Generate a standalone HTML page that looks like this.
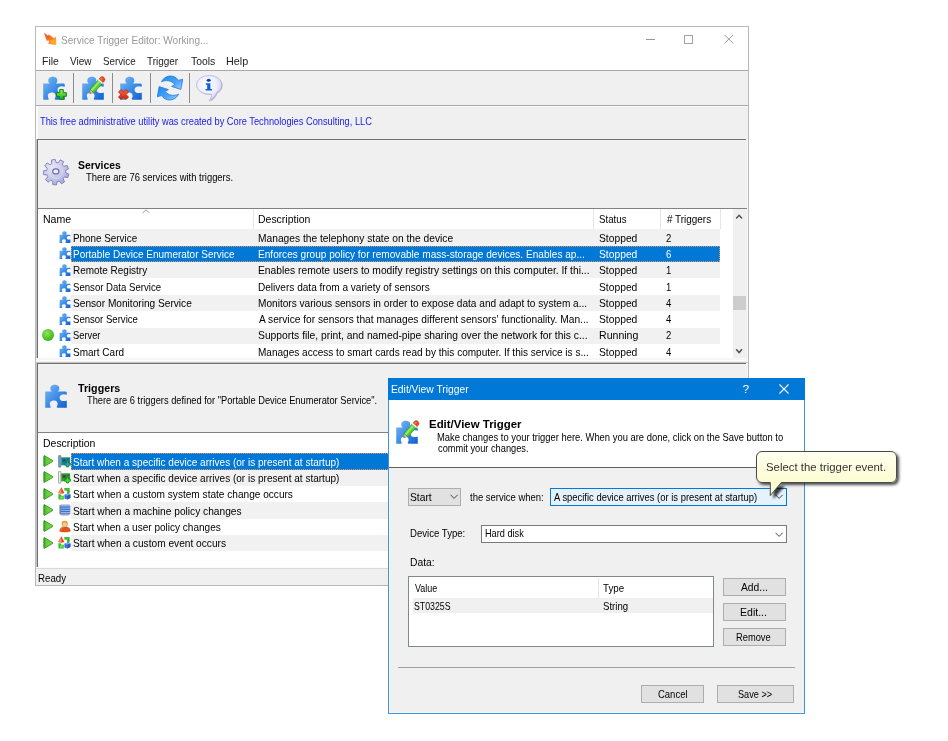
<!DOCTYPE html>
<html>
<head>
<meta charset="utf-8">
<title>Service Trigger Editor</title>
<style>
html,body{margin:0;padding:0;background:#fff;}
body{width:948px;height:741px;position:relative;overflow:hidden;font-family:"Liberation Sans",sans-serif;font-size:12px;color:#000;}
.a{position:absolute;}
.t{position:absolute;white-space:pre;line-height:14px;transform-origin:0 0;}
.btn{position:absolute;background:#e1e1e1;border:1px solid #adadad;box-sizing:border-box;}
</style>
</head>
<body>
<svg width="0" height="0" style="position:absolute">
<defs>
<linearGradient id="pg" x1="0" y1="0" x2="1" y2="1"><stop offset="0" stop-color="#7fbaf5"/><stop offset="0.5" stop-color="#3f8ee6"/><stop offset="1" stop-color="#0f5fcf"/></linearGradient>
<linearGradient id="gg" x1="0" y1="0" x2="1" y2="0"><stop offset="0" stop-color="#2f9a1e"/><stop offset="0.25" stop-color="#63c83c"/><stop offset="1" stop-color="#7ed650"/></linearGradient>
<linearGradient id="plusg" x1="0" y1="0" x2="0" y2="1"><stop offset="0" stop-color="#9af06a"/><stop offset="1" stop-color="#1fae12"/></linearGradient>
<linearGradient id="xg" x1="0" y1="0" x2="0" y2="1"><stop offset="0" stop-color="#ff6a3c"/><stop offset="1" stop-color="#d81e08"/></linearGradient>
<linearGradient id="rfg" x1="0" y1="0" x2="1" y2="1"><stop offset="0" stop-color="#1f86ee"/><stop offset="0.6" stop-color="#4ea4f8"/><stop offset="1" stop-color="#a6d2ff"/></linearGradient>
<linearGradient id="rfg2" x1="1" y1="1" x2="0" y2="0"><stop offset="0" stop-color="#1f86ee"/><stop offset="0.6" stop-color="#4ea4f8"/><stop offset="1" stop-color="#a6d2ff"/></linearGradient>
<radialGradient id="bubg" cx="0.4" cy="0.35" r="0.7"><stop offset="0" stop-color="#ffffff"/><stop offset="0.6" stop-color="#ececfd"/><stop offset="1" stop-color="#c4c4f2"/></radialGradient>
<linearGradient id="peng" x1="0" y1="0" x2="1" y2="1"><stop offset="0" stop-color="#b6f08a"/><stop offset="1" stop-color="#3fb81e"/></linearGradient>
<radialGradient id="gearg" cx="0.35" cy="0.3" r="0.8"><stop offset="0" stop-color="#e6e7f6"/><stop offset="0.6" stop-color="#c3c5e6"/><stop offset="1" stop-color="#9fa1d4"/></radialGradient>
</defs>
</svg>
<div class="a" style="left:35px;top:26px;width:714px;height:560px;background:#f0f0f0;box-sizing:border-box;border:1px solid #b9b9b9;"></div>
<div class="a" style="left:36px;top:27px;width:712px;height:43px;background:#fff;"></div>
<svg class="a" style="left:43px;top:32px" width="14" height="14" viewBox="0 0 14 14"><defs><linearGradient id="flg" x1="0" y1="0" x2="1" y2="1"><stop offset="0" stop-color="#cc4a50"/><stop offset="0.35" stop-color="#f8601e"/><stop offset="0.7" stop-color="#ff8a1c"/><stop offset="1" stop-color="#ffc61a"/></linearGradient></defs><path d="M1.2,0.9 L4.8,3.7 L5.9,2.8 L11,6.4 L12.7,5 L12.9,12.8 L5.4,11.6 L6.4,9.7 L5.1,7.8 L4,8.9 Z" fill="url(#flg)" stroke="#ff7a2a" stroke-width="0.4" stroke-linejoin="round"/><path d="M7,8 L11.6,7.4 L11.8,11.6 L7.4,10.8 Z" fill="#ffb01a" opacity="0.8"/></svg>
<div class="t" style="left:61.04px;top:33px;font-size:11.5px;transform:scaleX(0.8747);color:#999;">Service Trigger Editor: Working...</div>
<div class="a" style="left:646px;top:39px;width:9px;height:1px;background:#999;"></div>
<div class="a" style="left:684px;top:35px;width:7px;height:7px;background:transparent;border:1px solid #a2a2a2;"></div>
<svg class="a" style="left:724px;top:34px" width="10" height="10" viewBox="0 0 10 10"><path d="M0.5 0.8 L9.1 9.4 M9.1 0.8 L0.5 9.4" stroke="#999" stroke-width="1" fill="none"/></svg>
<div class="t" style="left:41.64px;top:54px;font-size:11.5px;transform:scaleX(0.9077);color:#222;">File</div>
<div class="t" style="left:69.56px;top:54px;font-size:11.5px;transform:scaleX(0.8746);color:#222;">View</div>
<div class="t" style="left:102.86px;top:54px;font-size:11.5px;transform:scaleX(0.8496);color:#222;">Service</div>
<div class="t" style="left:147.18px;top:54px;font-size:11.5px;transform:scaleX(0.8664);color:#222;">Trigger</div>
<div class="t" style="left:190.77px;top:54px;font-size:11.5px;transform:scaleX(0.9055);color:#222;">Tools</div>
<div class="t" style="left:225.81px;top:54px;font-size:11.5px;transform:scaleX(0.9404);color:#222;">Help</div>
<div class="a" style="left:36px;top:70px;width:712px;height:1px;background:#a9a9a9;"></div>
<div class="a" style="left:36px;top:105px;width:712px;height:1px;background:#a9a9a9;"></div>
<div class="a" style="left:36px;top:106px;width:712px;height:1px;background:#fbfbfb;"></div>
<div class="a" style="left:73px;top:73px;width:1px;height:30px;background:#8c8c8c;"></div>
<div class="a" style="left:112px;top:73px;width:1px;height:30px;background:#8c8c8c;"></div>
<div class="a" style="left:150px;top:73px;width:1px;height:30px;background:#8c8c8c;"></div>
<div class="a" style="left:189px;top:73px;width:1px;height:30px;background:#8c8c8c;"></div>
<svg class="a" style="left:42px;top:76px" width="24" height="24" viewBox="0 0 24 24"><path d="M1.2,7.6 L7.8,7.6 C6,6.5 5.8,3.8 7,2.2 C8.5,0.2 13,0.2 14.6,2.2 C15.8,3.8 15.6,6.5 13.8,7.6 L22,7.6 C23,8.5 23.2,10 22.5,10.8 C21,10 18.5,10 17,11 C15,12.5 15,15 17,16.5 C18.5,17.3 21,17.3 22.8,16.5 L22.8,23.8 L13.5,23.8 C12.5,23 12.5,22.5 13.3,21.5 C14.3,19.5 13.3,17 11,16.5 C8,16 5.5,17.5 5.8,20 C6,21.5 7,22.5 6.5,23.8 L1.2,23.8 Z" fill="url(#pg)"/></svg>
<svg class="a" style="left:56px;top:89px" width="11" height="11" viewBox="0 0 11 11"><path d="M3.7,0.6 H7.3 V3.7 H10.4 V7.3 H7.3 V10.4 H3.7 V7.3 H0.6 V3.7 H3.7 Z" fill="url(#plusg)" stroke="#0f8a0a" stroke-width="1" stroke-linejoin="round"/></svg>
<svg class="a" style="left:80.7px;top:76px" width="24" height="24" viewBox="0 0 24 24"><path d="M1.2,7.6 L7.8,7.6 C6,6.5 5.8,3.8 7,2.2 C8.5,0.2 13,0.2 14.6,2.2 C15.8,3.8 15.6,6.5 13.8,7.6 L22,7.6 C23,8.5 23.2,10 22.5,10.8 C21,10 18.5,10 17,11 C15,12.5 15,15 17,16.5 C18.5,17.3 21,17.3 22.8,16.5 L22.8,23.8 L13.5,23.8 C12.5,23 12.5,22.5 13.3,21.5 C14.3,19.5 13.3,17 11,16.5 C8,16 5.5,17.5 5.8,20 C6,21.5 7,22.5 6.5,23.8 L1.2,23.8 Z" fill="url(#pg)"/></svg>
<svg class="a" style="left:80.7px;top:76px;overflow:visible" width="26" height="24" viewBox="0 0 26 24"><g transform="translate(8.7,17.6) rotate(-48.5)"><path d="M0,0 L3.4,-2.5 L3.4,2.5 Z" fill="#dcc8a0" stroke="#8a7a5a" stroke-width="0.5"/><path d="M0,0 L1.4,-1 L1.4,1 Z" fill="#666"/><rect x="3.4" y="-2.7" width="12" height="5.4" fill="#58c832" stroke="#2f9a1a" stroke-width="0.7"/><rect x="3.6" y="-1.8" width="11.6" height="2.2" fill="#98f070" opacity="0.85"/><rect x="15.4" y="-2.7" width="1.9" height="5.4" fill="#f8f8f8" stroke="#b8b8b8" stroke-width="0.4"/><path d="M17.3,-2.7 H19.2 A2.4,2.7 0 0 1 19.2,2.7 H17.3 Z" fill="#e84a22" stroke="#c0381a" stroke-width="0.5"/><path d="M17.6,-1.8 H19.4 A1.2,1 0 0 1 19.4,0 H17.6 Z" fill="#f48a60" opacity="0.7"/></g></svg>
<svg class="a" style="left:119px;top:76px" width="24" height="24" viewBox="0 0 24 24"><path d="M1.2,7.6 L7.8,7.6 C6,6.5 5.8,3.8 7,2.2 C8.5,0.2 13,0.2 14.6,2.2 C15.8,3.8 15.6,6.5 13.8,7.6 L22,7.6 C23,8.5 23.2,10 22.5,10.8 C21,10 18.5,10 17,11 C15,12.5 15,15 17,16.5 C18.5,17.3 21,17.3 22.8,16.5 L22.8,23.8 L13.5,23.8 C12.5,23 12.5,22.5 13.3,21.5 C14.3,19.5 13.3,17 11,16.5 C8,16 5.5,17.5 5.8,20 C6,21.5 7,22.5 6.5,23.8 L1.2,23.8 Z" fill="url(#pg)"/></svg>
<svg class="a" style="left:118px;top:89px" width="11" height="11" viewBox="0 0 11 11"><path d="M2.9,0.6 L5.5,3 L8.1,0.6 L10.5,3 L8,5.5 L10.5,8.1 L8.1,10.5 L5.5,8 L2.9,10.5 L0.5,8.1 L3,5.5 L0.5,3 Z" fill="url(#xg)" stroke="#b81806" stroke-width="0.8" stroke-linejoin="round"/></svg>
<svg class="a" style="left:157px;top:75px" width="26" height="26" viewBox="0 0 26 26"><path d="M4.5,6.8 C7,1.2 14.5,-1.2 19.8,3.4 L21.6,5.4 L25.8,4.2 L23.8,14.4 L14.6,11.4 L17.8,9.6 C14.5,5.4 9,4.6 4.5,6.8 Z" fill="url(#rfg)" stroke="#1a7ae0" stroke-width="0.8" stroke-linejoin="round"/><path d="M4.5,6.8 C7,1.2 14.5,-1.2 19.8,3.4 L21.6,5.4 L25.8,4.2 L23.8,14.4 L14.6,11.4 L17.8,9.6 C14.5,5.4 9,4.6 4.5,6.8 Z" transform="rotate(180 13 13)" fill="url(#rfg2)" stroke="#1a7ae0" stroke-width="0.8" stroke-linejoin="round"/></svg>
<svg class="a" style="left:196px;top:75px" width="27" height="27" viewBox="0 0 27 27"><path d="M13.3,0.6 C20.5,0.6 25.8,4.6 25.8,9.8 C25.8,13.6 23.4,16.2 20.6,17.6 C19.6,21 16.8,24.4 13.2,25.8 C15.2,23.4 15.8,21 15.4,19.2 C7,19.8 0.6,15.4 0.6,9.8 C0.6,4.6 6,0.6 13.3,0.6 Z" fill="#8c8ca8" opacity="0.55" transform="translate(0.8,0.8)"/><path d="M13.3,0.6 C20.5,0.6 25.8,4.6 25.8,9.8 C25.8,13.6 23.4,16.2 20.6,17.6 C19.6,21 16.8,24.4 13.2,25.8 C15.2,23.4 15.8,21 15.4,19.2 C7,19.8 0.6,15.4 0.6,9.8 C0.6,4.6 6,0.6 13.3,0.6 Z" fill="url(#bubg)" stroke="#aeaee0" stroke-width="0.8"/><ellipse cx="12.7" cy="5.2" rx="2" ry="1.5" fill="#0b3fb0"/><path d="M9.8,8.2 H14.4 V14 H15.9 V15.6 H9.6 V14 H11.2 V9.8 H9.8 Z" fill="#0e62d8"/></svg>
<svg class="a" style="left:43px;top:159px" width="27" height="27" viewBox="0 0 27 27"><path d="M14.20,22.64 L13.42,26.00 L9.67,25.54 L9.72,22.09 L7.82,21.11 L5.05,23.18 L2.48,20.43 L4.74,17.81 L3.90,15.84 L0.45,15.65 L0.26,11.89 L3.66,11.33 L4.29,9.29 L1.77,6.92 L4.04,3.91 L7.01,5.68 L8.80,4.52 L8.39,1.09 L12.07,0.24 L13.20,3.50 L15.32,3.76 L17.21,0.87 L20.57,2.58 L19.35,5.81 L20.81,7.38 L24.11,6.38 L25.58,9.85 L22.57,11.53 L22.68,13.67 L25.85,15.03 L24.75,18.63 L21.36,17.99 L20.08,19.70 L21.63,22.78 L18.47,24.83 L16.29,22.15 Z" fill="url(#gearg)" stroke="#7a7cbe" stroke-width="0.9" stroke-linejoin="round"/><circle cx="13.1" cy="13" r="6.6" fill="none" stroke="#dcdef2" stroke-width="0.9" opacity="0.8"/><ellipse cx="12.8" cy="12.4" rx="3.1" ry="2.5" fill="#f0f0f0" stroke="#6c6eb2" stroke-width="1.2"/></svg>
<div class="t" style="left:39.79px;top:114px;font-size:11px;transform:scaleX(0.8420);color:#1a1aee;">This free administrative utility was created by Core Technologies Consulting, LLC</div>
<div class="a" style="left:37px;top:139px;width:709px;height:1px;background:#6e6e6e;"></div>
<div class="a" style="left:37px;top:140px;width:709px;height:1px;background:#f4f4f4;"></div>
<div class="a" style="left:37px;top:139px;width:1px;height:219px;background:#6e6e6e;"></div>
<div class="a" style="left:36px;top:139px;width:1px;height:428px;background:#c4c4c4;"></div>
<div class="a" style="left:36px;top:107px;width:2px;height:32px;background:#fbfbfb;"></div>
<div class="a" style="left:747px;top:139px;width:1px;height:428px;background:#f7f7f7;"></div>
<div class="t" style="left:78.2px;top:158px;font-size:11px;transform:scaleX(0.9439);font-weight:bold;">Services</div>
<div class="t" style="left:86.29px;top:170px;font-size:11px;transform:scaleX(0.8561);">There are 76 services with triggers.</div>
<div class="a" style="left:38px;top:208px;width:709px;height:1px;background:#828282;"></div>
<div class="a" style="left:38px;top:209px;width:708px;height:149px;background:#fff;"></div>
<div class="a" style="left:733px;top:209px;width:13px;height:149px;background:#f0f0f0;"></div>
<div class="t" style="left:42.63px;top:212px;font-size:11.5px;transform:scaleX(0.9171);">Name</div>
<div class="t" style="left:257.94px;top:212px;font-size:11.5px;transform:scaleX(0.9099);">Description</div>
<div class="t" style="left:599.16px;top:212px;font-size:11.5px;transform:scaleX(0.8432);">Status</div>
<div class="t" style="left:666.76px;top:212px;font-size:11.5px;transform:scaleX(0.8629);"># Triggers</div>
<div class="a" style="left:253px;top:209px;width:1px;height:20px;background:#e5e5e5;"></div>
<div class="a" style="left:593px;top:209px;width:1px;height:20px;background:#e5e5e5;"></div>
<div class="a" style="left:660px;top:209px;width:1px;height:20px;background:#e5e5e5;"></div>
<div class="a" style="left:720px;top:209px;width:1px;height:20px;background:#e5e5e5;"></div>
<div class="a" style="left:71px;top:229px;width:649px;height:17px;background:#f1f1f1;"></div>
<svg class="a" style="left:58.5px;top:231.0px" width="12" height="12" viewBox="0 0 24 24"><path d="M1.2,7.6 L7.8,7.6 C6,6.5 5.8,3.8 7,2.2 C8.5,0.2 13,0.2 14.6,2.2 C15.8,3.8 15.6,6.5 13.8,7.6 L22,7.6 C23,8.5 23.2,10 22.5,10.8 C21,10 18.5,10 17,11 C15,12.5 15,15 17,16.5 C18.5,17.3 21,17.3 22.8,16.5 L22.8,23.8 L13.5,23.8 C12.5,23 12.5,22.5 13.3,21.5 C14.3,19.5 13.3,17 11,16.5 C8,16 5.5,17.5 5.8,20 C6,21.5 7,22.5 6.5,23.8 L1.2,23.8 Z" fill="url(#pg)"/></svg>
<div class="t" style="left:72.79px;top:231px;font-size:11.5px;transform:scaleX(0.8576);">Phone Service</div>
<div class="t" style="left:257.96px;top:231px;font-size:11.5px;transform:scaleX(0.8897);">Manages the telephony state on the device</div>
<div class="t" style="left:599.13px;top:231px;font-size:11.5px;transform:scaleX(0.8946);">Stopped</div>
<div class="t" style="left:666.3px;top:231px;font-size:11.5px;transform:scaleX(0.8300);">2</div>
<div class="a" style="left:71px;top:246px;width:649px;height:16px;background:repeating-linear-gradient(90deg,#e8955a 0 1px,#0078d7 1px 2px) 0 0/100% 1px no-repeat,repeating-linear-gradient(90deg,#e8955a 0 1px,#0078d7 1px 2px) 0 100%/100% 1px no-repeat,repeating-linear-gradient(180deg,#e8955a 0 1px,#0078d7 1px 2px) 0 0/1px 100% no-repeat,repeating-linear-gradient(180deg,#e8955a 0 1px,#0078d7 1px 2px) 100% 0/1px 100% no-repeat,#0078d7"></div>
<svg class="a" style="left:58.5px;top:247.3px" width="12" height="12" viewBox="0 0 24 24"><path d="M1.2,7.6 L7.8,7.6 C6,6.5 5.8,3.8 7,2.2 C8.5,0.2 13,0.2 14.6,2.2 C15.8,3.8 15.6,6.5 13.8,7.6 L22,7.6 C23,8.5 23.2,10 22.5,10.8 C21,10 18.5,10 17,11 C15,12.5 15,15 17,16.5 C18.5,17.3 21,17.3 22.8,16.5 L22.8,23.8 L13.5,23.8 C12.5,23 12.5,22.5 13.3,21.5 C14.3,19.5 13.3,17 11,16.5 C8,16 5.5,17.5 5.8,20 C6,21.5 7,22.5 6.5,23.8 L1.2,23.8 Z" fill="url(#pg)"/></svg>
<div class="t" style="left:72.78px;top:247px;font-size:11.5px;transform:scaleX(0.8686);color:#fff;">Portable Device Enumerator Service</div>
<div class="t" style="left:257.97px;top:247px;font-size:11.5px;transform:scaleX(0.8771);color:#fff;">Enforces group policy for removable mass-storage devices. Enables ap...</div>
<div class="t" style="left:599.13px;top:247px;font-size:11.5px;transform:scaleX(0.8946);color:#fff;">Stopped</div>
<div class="t" style="left:666.3px;top:247px;font-size:11.5px;transform:scaleX(0.8300);color:#fff;">6</div>
<div class="a" style="left:71px;top:262px;width:649px;height:16px;background:#f1f1f1;"></div>
<svg class="a" style="left:58.5px;top:263.6px" width="12" height="12" viewBox="0 0 24 24"><path d="M1.2,7.6 L7.8,7.6 C6,6.5 5.8,3.8 7,2.2 C8.5,0.2 13,0.2 14.6,2.2 C15.8,3.8 15.6,6.5 13.8,7.6 L22,7.6 C23,8.5 23.2,10 22.5,10.8 C21,10 18.5,10 17,11 C15,12.5 15,15 17,16.5 C18.5,17.3 21,17.3 22.8,16.5 L22.8,23.8 L13.5,23.8 C12.5,23 12.5,22.5 13.3,21.5 C14.3,19.5 13.3,17 11,16.5 C8,16 5.5,17.5 5.8,20 C6,21.5 7,22.5 6.5,23.8 L1.2,23.8 Z" fill="url(#pg)"/></svg>
<div class="t" style="left:72.78px;top:263px;font-size:11.5px;transform:scaleX(0.8657);">Remote Registry</div>
<div class="t" style="left:257.96px;top:263px;font-size:11.5px;transform:scaleX(0.8942);">Enables remote users to modify registry settings on this computer. If thi...</div>
<div class="t" style="left:599.13px;top:263px;font-size:11.5px;transform:scaleX(0.8946);">Stopped</div>
<div class="t" style="left:666.3px;top:263px;font-size:11.5px;transform:scaleX(0.8300);">1</div>
<svg class="a" style="left:58.5px;top:280.0px" width="12" height="12" viewBox="0 0 24 24"><path d="M1.2,7.6 L7.8,7.6 C6,6.5 5.8,3.8 7,2.2 C8.5,0.2 13,0.2 14.6,2.2 C15.8,3.8 15.6,6.5 13.8,7.6 L22,7.6 C23,8.5 23.2,10 22.5,10.8 C21,10 18.5,10 17,11 C15,12.5 15,15 17,16.5 C18.5,17.3 21,17.3 22.8,16.5 L22.8,23.8 L13.5,23.8 C12.5,23 12.5,22.5 13.3,21.5 C14.3,19.5 13.3,17 11,16.5 C8,16 5.5,17.5 5.8,20 C6,21.5 7,22.5 6.5,23.8 L1.2,23.8 Z" fill="url(#pg)"/></svg>
<div class="t" style="left:73.16px;top:280px;font-size:11.5px;transform:scaleX(0.8350);">Sensor Data Service</div>
<div class="t" style="left:257.97px;top:280px;font-size:11.5px;transform:scaleX(0.8750);">Delivers data from a variety of sensors</div>
<div class="t" style="left:599.13px;top:280px;font-size:11.5px;transform:scaleX(0.8946);">Stopped</div>
<div class="t" style="left:666.3px;top:280px;font-size:11.5px;transform:scaleX(0.8300);">1</div>
<div class="a" style="left:71px;top:295px;width:649px;height:16px;background:#f1f1f1;"></div>
<svg class="a" style="left:58.5px;top:296.3px" width="12" height="12" viewBox="0 0 24 24"><path d="M1.2,7.6 L7.8,7.6 C6,6.5 5.8,3.8 7,2.2 C8.5,0.2 13,0.2 14.6,2.2 C15.8,3.8 15.6,6.5 13.8,7.6 L22,7.6 C23,8.5 23.2,10 22.5,10.8 C21,10 18.5,10 17,11 C15,12.5 15,15 17,16.5 C18.5,17.3 21,17.3 22.8,16.5 L22.8,23.8 L13.5,23.8 C12.5,23 12.5,22.5 13.3,21.5 C14.3,19.5 13.3,17 11,16.5 C8,16 5.5,17.5 5.8,20 C6,21.5 7,22.5 6.5,23.8 L1.2,23.8 Z" fill="url(#pg)"/></svg>
<div class="t" style="left:73.14px;top:296px;font-size:11.5px;transform:scaleX(0.8809);">Sensor Monitoring Service</div>
<div class="t" style="left:257.97px;top:296px;font-size:11.5px;transform:scaleX(0.8787);">Monitors various sensors in order to expose data and adapt to system a...</div>
<div class="t" style="left:599.13px;top:296px;font-size:11.5px;transform:scaleX(0.8946);">Stopped</div>
<div class="t" style="left:666.3px;top:296px;font-size:11.5px;transform:scaleX(0.8300);">4</div>
<svg class="a" style="left:58.5px;top:312.6px" width="12" height="12" viewBox="0 0 24 24"><path d="M1.2,7.6 L7.8,7.6 C6,6.5 5.8,3.8 7,2.2 C8.5,0.2 13,0.2 14.6,2.2 C15.8,3.8 15.6,6.5 13.8,7.6 L22,7.6 C23,8.5 23.2,10 22.5,10.8 C21,10 18.5,10 17,11 C15,12.5 15,15 17,16.5 C18.5,17.3 21,17.3 22.8,16.5 L22.8,23.8 L13.5,23.8 C12.5,23 12.5,22.5 13.3,21.5 C14.3,19.5 13.3,17 11,16.5 C8,16 5.5,17.5 5.8,20 C6,21.5 7,22.5 6.5,23.8 L1.2,23.8 Z" fill="url(#pg)"/></svg>
<div class="t" style="left:73.17px;top:312px;font-size:11.5px;transform:scaleX(0.8318);">Sensor Service</div>
<div class="t" style="left:258.78px;top:312px;font-size:11.5px;transform:scaleX(0.8878);">A service for sensors that manages different sensors&#x27; functionality. Man...</div>
<div class="t" style="left:599.13px;top:312px;font-size:11.5px;transform:scaleX(0.8946);">Stopped</div>
<div class="t" style="left:666.3px;top:312px;font-size:11.5px;transform:scaleX(0.8300);">4</div>
<div class="a" style="left:71px;top:328px;width:649px;height:16px;background:#f1f1f1;"></div>
<svg class="a" style="left:58.5px;top:328.9px" width="12" height="12" viewBox="0 0 24 24"><path d="M1.2,7.6 L7.8,7.6 C6,6.5 5.8,3.8 7,2.2 C8.5,0.2 13,0.2 14.6,2.2 C15.8,3.8 15.6,6.5 13.8,7.6 L22,7.6 C23,8.5 23.2,10 22.5,10.8 C21,10 18.5,10 17,11 C15,12.5 15,15 17,16.5 C18.5,17.3 21,17.3 22.8,16.5 L22.8,23.8 L13.5,23.8 C12.5,23 12.5,22.5 13.3,21.5 C14.3,19.5 13.3,17 11,16.5 C8,16 5.5,17.5 5.8,20 C6,21.5 7,22.5 6.5,23.8 L1.2,23.8 Z" fill="url(#pg)"/></svg>
<div class="t" style="left:73.18px;top:328px;font-size:11.5px;transform:scaleX(0.8113);">Server</div>
<div class="t" style="left:258.33px;top:328px;font-size:11.5px;transform:scaleX(0.8965);">Supports file, print, and named-pipe sharing over the network for this c...</div>
<div class="t" style="left:598.73px;top:328px;font-size:11.5px;transform:scaleX(0.9185);">Running</div>
<div class="t" style="left:666.3px;top:328px;font-size:11.5px;transform:scaleX(0.8300);">2</div>
<svg class="a" style="left:58.5px;top:345.2px" width="12" height="12" viewBox="0 0 24 24"><path d="M1.2,7.6 L7.8,7.6 C6,6.5 5.8,3.8 7,2.2 C8.5,0.2 13,0.2 14.6,2.2 C15.8,3.8 15.6,6.5 13.8,7.6 L22,7.6 C23,8.5 23.2,10 22.5,10.8 C21,10 18.5,10 17,11 C15,12.5 15,15 17,16.5 C18.5,17.3 21,17.3 22.8,16.5 L22.8,23.8 L13.5,23.8 C12.5,23 12.5,22.5 13.3,21.5 C14.3,19.5 13.3,17 11,16.5 C8,16 5.5,17.5 5.8,20 C6,21.5 7,22.5 6.5,23.8 L1.2,23.8 Z" fill="url(#pg)"/></svg>
<div class="t" style="left:73.15px;top:345px;font-size:11.5px;transform:scaleX(0.8674);">Smart Card</div>
<div class="t" style="left:257.98px;top:345px;font-size:11.5px;transform:scaleX(0.8727);">Manages access to smart cards read by this computer. If this service is s...</div>
<div class="t" style="left:599.13px;top:345px;font-size:11.5px;transform:scaleX(0.8946);">Stopped</div>
<div class="t" style="left:666.3px;top:345px;font-size:11.5px;transform:scaleX(0.8300);">4</div>
<div class="a" style="left:42px;top:329px;width:12px;height:12px;border-radius:6px;background:radial-gradient(circle at 40% 35%,#8fe65a,#3fb51c 70%,#2e9a12)"></div>
<svg class="a" style="left:735px;top:213px" width="9" height="7" viewBox="0 0 9 7"><path d="M1.2 5.4 L4.1 2.3 L7 5.4" stroke="#505050" stroke-width="1.5" fill="none"/></svg>
<svg class="a" style="left:735px;top:347px" width="9" height="8" viewBox="0 0 9 8"><path d="M1.2 2.2 L4.1 5.5 L7 2.2" stroke="#505050" stroke-width="1.5" fill="none"/></svg>
<div class="a" style="left:733px;top:296px;width:13px;height:14px;background:#cdcdcd;"></div>
<svg class="a" style="left:142px;top:209px" width="8" height="5" viewBox="0 0 8 5"><path d="M0.5 4 L4 0.8 L7.5 4" stroke="#9a9a9a" stroke-width="1" fill="none"/></svg>
<div class="a" style="left:36px;top:358px;width:712px;height:2px;background:#f6f6f6;"></div>
<div class="a" style="left:36px;top:360px;width:712px;height:1px;background:#ffffff;"></div>
<div class="a" style="left:36px;top:361px;width:712px;height:1px;background:#f0f0f0;"></div>
<div class="a" style="left:36px;top:362px;width:712px;height:1px;background:#c8c8c8;"></div>
<div class="a" style="left:37px;top:363px;width:709px;height:1px;background:#6e6e6e;"></div>
<div class="a" style="left:37px;top:363px;width:1px;height:204px;background:#6e6e6e;"></div>
<div class="a" style="left:38px;top:364px;width:708px;height:1px;background:#f4f4f4;"></div>
<svg class="a" style="left:44px;top:384px" width="24" height="24" viewBox="0 0 24 24"><path d="M1.2,7.6 L7.8,7.6 C6,6.5 5.8,3.8 7,2.2 C8.5,0.2 13,0.2 14.6,2.2 C15.8,3.8 15.6,6.5 13.8,7.6 L22,7.6 C23,8.5 23.2,10 22.5,10.8 C21,10 18.5,10 17,11 C15,12.5 15,15 17,16.5 C18.5,17.3 21,17.3 22.8,16.5 L22.8,23.8 L13.5,23.8 C12.5,23 12.5,22.5 13.3,21.5 C14.3,19.5 13.3,17 11,16.5 C8,16 5.5,17.5 5.8,20 C6,21.5 7,22.5 6.5,23.8 L1.2,23.8 Z" fill="url(#pg)"/></svg>
<div class="t" style="left:78.48px;top:381px;font-size:11px;transform:scaleX(0.9736);font-weight:bold;">Triggers</div>
<div class="t" style="left:87.19px;top:393px;font-size:11px;transform:scaleX(0.8448);">There are 6 triggers defined for &quot;Portable Device Enumerator Service&quot;.</div>
<div class="a" style="left:38px;top:432px;width:709px;height:1px;background:#828282;"></div>
<div class="a" style="left:38px;top:433px;width:709px;height:134px;background:#fff;"></div>
<div class="t" style="left:42.84px;top:436px;font-size:11.5px;transform:scaleX(0.9099);">Description</div>
<div class="a" style="left:71px;top:453px;width:676px;height:17px;background:repeating-linear-gradient(90deg,#e8955a 0 1px,#0078d7 1px 2px) 0 0/100% 1px no-repeat,repeating-linear-gradient(90deg,#e8955a 0 1px,#0078d7 1px 2px) 0 100%/100% 1px no-repeat,repeating-linear-gradient(180deg,#e8955a 0 1px,#0078d7 1px 2px) 0 0/1px 100% no-repeat,repeating-linear-gradient(180deg,#e8955a 0 1px,#0078d7 1px 2px) 100% 0/1px 100% no-repeat,#0078d7"></div>
<svg class="a" style="left:43px;top:455.0px" width="11" height="13" viewBox="0 0 11 13"><path d="M0.8,1.1 Q0.8,0.4 1.5,0.7 L9.7,5.5 Q10.3,6 9.7,6.5 L1.5,11.3 Q0.8,11.6 0.8,10.9 Z" fill="url(#gg)" stroke="#2a8c16" stroke-width="0.8" stroke-linejoin="round"/></svg>
<svg class="a" style="left:57.8px;top:454.7px" width="13" height="13" viewBox="0 0 13 13"><rect x="0.5" y="0.3" width="2.4" height="12" rx="0.8" fill="#5aa0e0" stroke="#777" stroke-width="0.6"/><rect x="3.2" y="2.3" width="9" height="8" fill="#1a8a7a"/><rect x="4.6" y="4" width="3.2" height="2.8" fill="#1a4aa0"/><rect x="9" y="3.6" width="2" height="1.6" fill="#1a4aa0" opacity="0.7"/><path d="M8.6,6.6 H10.6 V8.2 H12.4 V10.2 H10.6 V12 H8.6 V10.2 H6.8 V8.2 H8.6 Z" fill="#30b088" stroke="#0a6a58" stroke-width="0.7"/></svg>
<div class="t" style="left:73.14px;top:455px;font-size:11.5px;transform:scaleX(0.8719);color:#fff;">Start when a specific device arrives (or is present at startup)</div>
<div class="a" style="left:71px;top:470px;width:676px;height:16px;background:#f1f1f1;"></div>
<svg class="a" style="left:43px;top:471.3px" width="11" height="13" viewBox="0 0 11 13"><path d="M0.8,1.1 Q0.8,0.4 1.5,0.7 L9.7,5.5 Q10.3,6 9.7,6.5 L1.5,11.3 Q0.8,11.6 0.8,10.9 Z" fill="url(#gg)" stroke="#2a8c16" stroke-width="0.8" stroke-linejoin="round"/></svg>
<svg class="a" style="left:57.8px;top:471.0px" width="13" height="13" viewBox="0 0 13 13"><rect x="0.5" y="0.3" width="2.4" height="12" rx="0.8" fill="#ececec" stroke="#777" stroke-width="0.6"/><rect x="3.2" y="2.3" width="9" height="8" fill="#2f9e2a"/><rect x="4.6" y="4" width="3.2" height="2.8" fill="#4a3a5a"/><rect x="9" y="3.6" width="2" height="1.6" fill="#4a3a5a" opacity="0.7"/><path d="M8.6,6.6 H10.6 V8.2 H12.4 V10.2 H10.6 V12 H8.6 V10.2 H6.8 V8.2 H8.6 Z" fill="#52e432" stroke="#0a7a0a" stroke-width="0.7"/></svg>
<div class="t" style="left:73.14px;top:471px;font-size:11.5px;transform:scaleX(0.8719);">Start when a specific device arrives (or is present at startup)</div>
<svg class="a" style="left:43px;top:487.6px" width="11" height="13" viewBox="0 0 11 13"><path d="M0.8,1.1 Q0.8,0.4 1.5,0.7 L9.7,5.5 Q10.3,6 9.7,6.5 L1.5,11.3 Q0.8,11.6 0.8,10.9 Z" fill="url(#gg)" stroke="#2a8c16" stroke-width="0.8" stroke-linejoin="round"/></svg>
<svg class="a" style="left:58px;top:487.3px" width="13" height="13" viewBox="0 0 13 13"><path d="M6.3,1 H11.6 V3 Q12.3,5 11.1,6.9 L8.9,6.7 Q9.8,4.6 8.6,3.5 L6.5,3.7 Z" fill="#2fb526"/><path d="M7,1.4 H11 V2.6 Q9,2 7,2.6 Z" fill="#5ad848" opacity="0.8"/><path d="M0.5,6.8 Q2,7.8 3,7.2 L3.6,9 L5.8,8.5 V12.4 H0.6 Q0.2,9.5 0.5,6.8 Z" fill="#35c02c"/><path d="M2,9.6 L5,9.2 V11.6 H2 Z" fill="#7cf060" opacity="0.75"/><path d="M3.3,0.2 L6.4,6 Q3.3,7.6 0.2,6 Z" fill="#ee3f1c"/><path d="M3.1,1.2 L3.6,6.6 Q2,6.6 0.9,6 Z" fill="#ffb080" opacity="0.8"/><path d="M6.4,7.8 L9.6,6.4 L12.4,7.6 V11 L9.4,12.6 L6.4,11.4 Z" fill="#3c74d8"/><path d="M6.4,7.8 L9.6,6.4 L12.4,7.6 L9.4,8.8 Z" fill="#78a6f2"/><path d="M9.4,8.8 L12.4,7.6 V11 L9.4,12.6 Z" fill="#2c58c2"/></svg>
<div class="t" style="left:73.14px;top:487px;font-size:11.5px;transform:scaleX(0.8777);">Start when a custom system state change occurs</div>
<div class="a" style="left:71px;top:502px;width:676px;height:17px;background:#f1f1f1;"></div>
<svg class="a" style="left:43px;top:503.9px" width="11" height="13" viewBox="0 0 11 13"><path d="M0.8,1.1 Q0.8,0.4 1.5,0.7 L9.7,5.5 Q10.3,6 9.7,6.5 L1.5,11.3 Q0.8,11.6 0.8,10.9 Z" fill="url(#gg)" stroke="#2a8c16" stroke-width="0.8" stroke-linejoin="round"/></svg>
<svg class="a" style="left:58.7px;top:503.59999999999997px" width="12" height="12" viewBox="0 0 12 12"><path d="M0.6,1.4 L2.2,0.4 H10.6 L11.4,1.4 V9.6 L9.6,11.4 H2 L0.6,10 Z" fill="#9a9cc4"/><rect x="2" y="1.4" width="9" height="9" fill="#b4b8d8"/><rect x="2" y="2.4" width="9" height="1.3" fill="#2a78e0"/><rect x="2" y="4.6" width="9" height="1.3" fill="#2a78e0"/><rect x="2" y="6.8" width="9" height="1.3" fill="#2a78e0"/><rect x="2" y="9" width="9" height="1.1" fill="#5a8ad8"/><rect x="0.6" y="1.4" width="1.4" height="8.6" fill="#7a7cae"/></svg>
<div class="t" style="left:73.14px;top:504px;font-size:11.5px;transform:scaleX(0.8847);">Start when a machine policy changes</div>
<svg class="a" style="left:43px;top:520.2px" width="11" height="13" viewBox="0 0 11 13"><path d="M0.8,1.1 Q0.8,0.4 1.5,0.7 L9.7,5.5 Q10.3,6 9.7,6.5 L1.5,11.3 Q0.8,11.6 0.8,10.9 Z" fill="url(#gg)" stroke="#2a8c16" stroke-width="0.8" stroke-linejoin="round"/></svg>
<svg class="a" style="left:58.7px;top:519.9000000000001px" width="12" height="13" viewBox="0 0 12 13"><path d="M0.4,11.2 C0.4,8 2.6,6.4 6,6.4 C9.4,6.4 11.6,8 11.6,11.2 C9.6,12.6 2.4,12.6 0.4,11.2 Z" fill="#e0521e"/><path d="M2,10 C2.4,8 4,7.2 6,7.2" fill="none" stroke="#f48a4a" stroke-width="1" opacity="0.8"/><circle cx="5.7" cy="3.9" r="3.1" fill="#d89a28"/><circle cx="5.7" cy="4.6" r="2.3" fill="#fcc88a"/><path d="M4.6,7 L5.7,8.6 L6.8,7 Z" fill="#7a6a9a"/></svg>
<div class="t" style="left:73.14px;top:520px;font-size:11.5px;transform:scaleX(0.8720);">Start when a user policy changes</div>
<div class="a" style="left:71px;top:535px;width:676px;height:16px;background:#f1f1f1;"></div>
<svg class="a" style="left:43px;top:536.5px" width="11" height="13" viewBox="0 0 11 13"><path d="M0.8,1.1 Q0.8,0.4 1.5,0.7 L9.7,5.5 Q10.3,6 9.7,6.5 L1.5,11.3 Q0.8,11.6 0.8,10.9 Z" fill="url(#gg)" stroke="#2a8c16" stroke-width="0.8" stroke-linejoin="round"/></svg>
<svg class="a" style="left:58px;top:536.2px" width="13" height="13" viewBox="0 0 13 13"><path d="M6.3,1 H11.6 V3 Q12.3,5 11.1,6.9 L8.9,6.7 Q9.8,4.6 8.6,3.5 L6.5,3.7 Z" fill="#2fb526"/><path d="M7,1.4 H11 V2.6 Q9,2 7,2.6 Z" fill="#5ad848" opacity="0.8"/><path d="M0.5,6.8 Q2,7.8 3,7.2 L3.6,9 L5.8,8.5 V12.4 H0.6 Q0.2,9.5 0.5,6.8 Z" fill="#35c02c"/><path d="M2,9.6 L5,9.2 V11.6 H2 Z" fill="#7cf060" opacity="0.75"/><path d="M3.3,0.2 L6.4,6 Q3.3,7.6 0.2,6 Z" fill="#ee3f1c"/><path d="M3.1,1.2 L3.6,6.6 Q2,6.6 0.9,6 Z" fill="#ffb080" opacity="0.8"/><path d="M6.4,7.8 L9.6,6.4 L12.4,7.6 V11 L9.4,12.6 L6.4,11.4 Z" fill="#3c74d8"/><path d="M6.4,7.8 L9.6,6.4 L12.4,7.6 L9.4,8.8 Z" fill="#78a6f2"/><path d="M9.4,8.8 L12.4,7.6 V11 L9.4,12.6 Z" fill="#2c58c2"/></svg>
<div class="t" style="left:73.14px;top:536px;font-size:11.5px;transform:scaleX(0.8834);">Start when a custom event occurs</div>
<div class="a" style="left:36px;top:567px;width:712px;height:1px;background:#fbfbfb;"></div>
<div class="a" style="left:36px;top:568px;width:712px;height:1px;background:#dadada;"></div>
<div class="t" style="left:37.51px;top:571px;font-size:11.5px;transform:scaleX(0.8427);">Ready</div>
<div class="a" style="left:388px;top:378px;width:417px;height:336px;background:#f0f0f0;box-sizing:border-box;border:1px solid #3d94e3;"></div>
<div class="a" style="left:389px;top:468px;width:1px;height:245px;background:#f9f6f2;"></div>
<div class="a" style="left:389px;top:712px;width:415px;height:1px;background:#f9f6f2;"></div>
<div class="a" style="left:388px;top:378px;width:417px;height:22px;background:#0078d7;"></div>
<div class="a" style="left:389px;top:400px;width:415px;height:67px;background:#fff;"></div>
<div class="a" style="left:389px;top:467px;width:415px;height:1px;background:#5f5f5f;"></div>
<div class="t" style="left:390.96px;top:382px;font-size:11.5px;transform:scaleX(0.8952);color:#fff;">Edit/View Trigger</div>
<div class="t" style="left:742.53px;top:382px;font-size:11.5px;transform:scaleX(1.0000);color:#fff;">?</div>
<svg class="a" style="left:779px;top:384px" width="10" height="10" viewBox="0 0 10 10"><path d="M0.5 0.5 L9.5 9.5 M9.5 0.5 L0.5 9.5" stroke="#fff" stroke-width="1.1" fill="none"/></svg>
<svg class="a" style="left:395px;top:420px" width="24" height="24" viewBox="0 0 24 24"><path d="M1.2,7.6 L7.8,7.6 C6,6.5 5.8,3.8 7,2.2 C8.5,0.2 13,0.2 14.6,2.2 C15.8,3.8 15.6,6.5 13.8,7.6 L22,7.6 C23,8.5 23.2,10 22.5,10.8 C21,10 18.5,10 17,11 C15,12.5 15,15 17,16.5 C18.5,17.3 21,17.3 22.8,16.5 L22.8,23.8 L13.5,23.8 C12.5,23 12.5,22.5 13.3,21.5 C14.3,19.5 13.3,17 11,16.5 C8,16 5.5,17.5 5.8,20 C6,21.5 7,22.5 6.5,23.8 L1.2,23.8 Z" fill="url(#pg)"/></svg>
<svg class="a" style="left:395px;top:420px;overflow:visible" width="26" height="24" viewBox="0 0 26 24"><g transform="translate(8.7,17.6) rotate(-48.5)"><path d="M0,0 L3.4,-2.5 L3.4,2.5 Z" fill="#dcc8a0" stroke="#8a7a5a" stroke-width="0.5"/><path d="M0,0 L1.4,-1 L1.4,1 Z" fill="#666"/><rect x="3.4" y="-2.7" width="12" height="5.4" fill="#58c832" stroke="#2f9a1a" stroke-width="0.7"/><rect x="3.6" y="-1.8" width="11.6" height="2.2" fill="#98f070" opacity="0.85"/><rect x="15.4" y="-2.7" width="1.9" height="5.4" fill="#f8f8f8" stroke="#b8b8b8" stroke-width="0.4"/><path d="M17.3,-2.7 H19.2 A2.4,2.7 0 0 1 19.2,2.7 H17.3 Z" fill="#e84a22" stroke="#c0381a" stroke-width="0.5"/><path d="M17.6,-1.8 H19.4 A1.2,1 0 0 1 19.4,0 H17.6 Z" fill="#f48a60" opacity="0.7"/></g></svg>
<div class="t" style="left:429.04px;top:417px;font-size:11px;transform:scaleX(1.0393);font-weight:bold;">Edit/View Trigger</div>
<div class="t" style="left:437.13px;top:430px;font-size:11px;transform:scaleX(0.8552);">Make changes to your trigger here. When you are done, click on the Save button to</div>
<div class="t" style="left:437.51px;top:441px;font-size:11px;transform:scaleX(0.8414);">commit your changes.</div>
<div class="btn" style="left:408px;top:488px;width:53px;height:18px"></div>
<div class="t" style="left:410.33px;top:490px;font-size:11px;transform:scaleX(0.9316);">Start</div>
<svg class="a" style="left:449.6px;top:494.4px" width="9" height="6" viewBox="0 0 9 6"><path d="M0.5 0.8 L4.1 4.4 L7.7 0.8" stroke="#444" stroke-width="1" fill="none"/></svg>
<div class="t" style="left:469.66px;top:490px;font-size:11px;transform:scaleX(0.8611);">the service when:</div>
<div class="a" style="left:550px;top:488px;width:237px;height:18px;box-sizing:border-box;border:1px solid #0078d7;background:#e5f1fb"></div>
<div class="t" style="left:553.68px;top:490px;font-size:11px;transform:scaleX(0.8562);">A specific device arrives (or is present at startup)</div>
<svg class="a" style="left:774.8px;top:494.4px" width="9" height="6" viewBox="0 0 9 6"><path d="M0.5 0.8 L4.1 4.4 L7.7 0.8" stroke="#444" stroke-width="1" fill="none"/></svg>
<div class="t" style="left:410.01px;top:526px;font-size:11px;transform:scaleX(0.8723);">Device Type:</div>
<div class="a" style="left:481px;top:525px;width:306px;height:18px;box-sizing:border-box;border:1px solid #7a7a7a;background:#fff"></div>
<div class="t" style="left:484.75px;top:526px;font-size:11px;transform:scaleX(0.8338);">Hard disk</div>
<svg class="a" style="left:774.8px;top:531.6px" width="9" height="6" viewBox="0 0 9 6"><path d="M0.5 0.8 L4.1 4.4 L7.7 0.8" stroke="#444" stroke-width="1" fill="none"/></svg>
<div class="t" style="left:409.95px;top:555px;font-size:11px;transform:scaleX(0.9391);">Data:</div>
<div class="a" style="left:408px;top:576px;width:306px;height:71px;box-sizing:border-box;border:1px solid #828790;background:#fff"></div>
<div class="t" style="left:414.56px;top:581px;font-size:11px;transform:scaleX(0.8140);">Value</div>
<div class="t" style="left:602.98px;top:581px;font-size:11px;transform:scaleX(0.8870);">Type</div>
<div class="a" style="left:598px;top:578px;width:1px;height:20px;background:#e5e5e5;"></div>
<div class="a" style="left:413px;top:598px;width:300px;height:15px;background:#f0f0f0;"></div>
<div class="t" style="left:414.2px;top:599px;font-size:11px;transform:scaleX(0.7958);">ST0325S</div>
<div class="t" style="left:602.76px;top:599px;font-size:11px;transform:scaleX(0.8755);">String</div>
<div class="btn" style="left:723px;top:578px;width:63px;height:18px"></div>
<div class="t" style="left:740.68px;top:580px;font-size:11px;transform:scaleX(0.9345);">Add...</div>
<div class="btn" style="left:723px;top:603px;width:63px;height:18px"></div>
<div class="t" style="left:739.54px;top:605px;font-size:11px;transform:scaleX(0.9574);">Edit...</div>
<div class="btn" style="left:723px;top:628px;width:63px;height:18px"></div>
<div class="t" style="left:736.14px;top:630px;font-size:11px;transform:scaleX(0.8466);">Remove</div>
<div class="btn" style="left:641px;top:685px;width:63px;height:18px"></div>
<div class="t" style="left:658.42px;top:687px;font-size:11px;transform:scaleX(0.8620);">Cancel</div>
<div class="btn" style="left:717px;top:685px;width:77px;height:18px"></div>
<div class="t" style="left:738.38px;top:687px;font-size:11px;transform:scaleX(0.8313);">Save &gt;&gt;</div>
<div class="a" style="left:398px;top:667px;width:397px;height:1px;background:#a0a0a0;"></div>
<svg class="a" style="left:764px;top:480px;overflow:visible" width="26" height="22" viewBox="0 0 26 22"><defs><filter id="blr" x="-50%" y="-50%" width="200%" height="200%"><feGaussianBlur stdDeviation="1.1"/></filter></defs><path d="M9.5 6 L9.5 19 L21 6 Z" fill="#000" opacity="0.75" filter="url(#blr)"/></svg>
<div class="a" style="left:756px;top:451px;width:141px;height:32px;box-sizing:border-box;border:1px solid #4a4a4a;border-radius:6px;background:linear-gradient(#ffffef,#fcfcd2);box-shadow:2px 2px 3px rgba(0,0,0,0.7)"></div>
<svg class="a" style="left:764px;top:480px;overflow:visible" width="26" height="22" viewBox="0 0 26 22"><path d="M6.3 1 L6.3 15.6 L18 1.6 Z" fill="#fcfcd2" stroke="none"/><path d="M6.3 2.4 L6.3 15.6 L17.4 2.4" fill="none" stroke="#4a4a4a" stroke-width="1"/></svg>
<div class="t" style="left:766.38px;top:460px;font-size:11px;transform:scaleX(1.0342);color:#333;">Select the trigger event.</div>
</body>
</html>
